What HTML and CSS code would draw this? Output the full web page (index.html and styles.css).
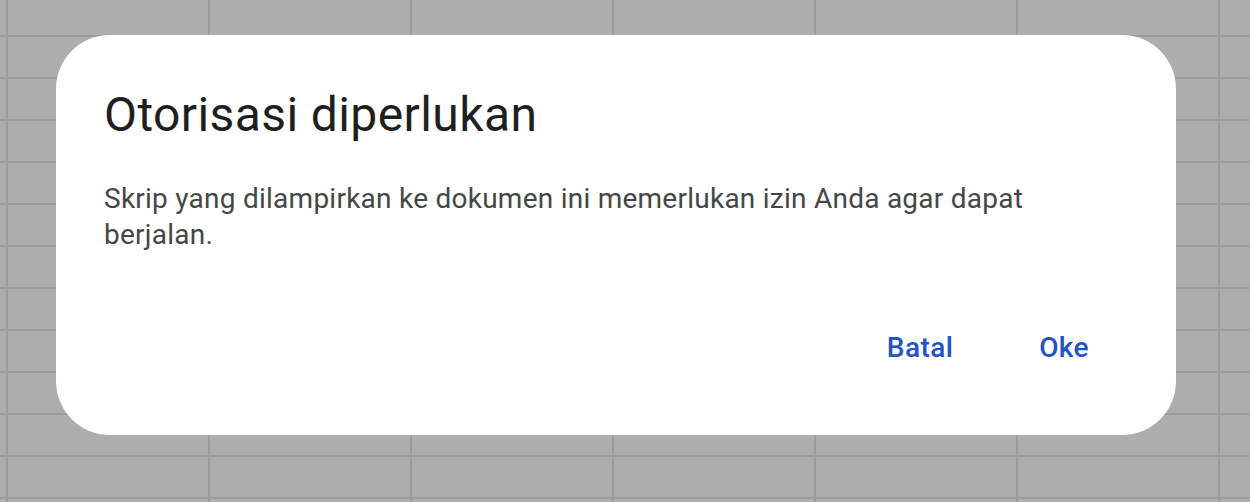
FILE: index.html
```html
<!DOCTYPE html>
<html lang="id">
<head>
<meta charset="utf-8">
<title>Otorisasi diperlukan</title>
<link rel="stylesheet" href="styles.css">
</head>
<body>
<div class="sheet">
  <div class="dialog" role="dialog">
    <h1 class="title">Otorisasi diperlukan</h1>
    <p class="message">Skrip yang dilampirkan ke dokumen ini memerlukan izin Anda agar dapat berjalan.</p>
    <div class="actions">
      <button class="btn">Batal</button>
      <button class="btn">Oke</button>
    </div>
  </div>
</div>
</body>
</html>
```

FILE: styles.css
```css
html, body {
  margin: 0;
  padding: 0;
  width: 1250px;
  height: 502px;
  overflow: hidden;
}
body {
  background-color: #adadad;
  background-image:
    linear-gradient(to right, #9b9b9b 0, #9b9b9b 2px, transparent 2px),
    linear-gradient(to bottom, #9b9b9b 0, #9b9b9b 2px, transparent 2px);
  background-size: 202px 100%, 100% 42px;
  background-position: 6px 0, 0 35px;
  font-family: Roboto, "Liberation Sans", sans-serif;
}
.sheet {
  padding: 35px 74px 0 56px;
}
.dialog {
  box-sizing: border-box;
  width: 1120px;
  height: 400px;
  background: #ffffff;
  border-radius: 54px;
  padding: 52px 87px 0 48px;
  display: flex;
  flex-direction: column;
}
.title {
  margin: 0;
  font-size: 48px;
  font-weight: 400;
  line-height: 56px;
  letter-spacing: 0.4px;
  color: #1f1f1f;
}
.message {
  margin: 38px 0 0 0;
  width: 960px;
  font-size: 28px;
  line-height: 36px;
  letter-spacing: 0.25px;
  color: #444746;
}
.actions {
  display: flex;
  justify-content: flex-end;
  gap: 86px;
  margin-top: 75px;
}
.btn {
  border: none;
  background: none;
  padding: 0;
  font-family: Roboto, "Liberation Sans", sans-serif;
  font-size: 28px;
  font-weight: 500;
  line-height: 40px;
  letter-spacing: 0.4px;
  color: #2055c9;
  cursor: pointer;
}
```
